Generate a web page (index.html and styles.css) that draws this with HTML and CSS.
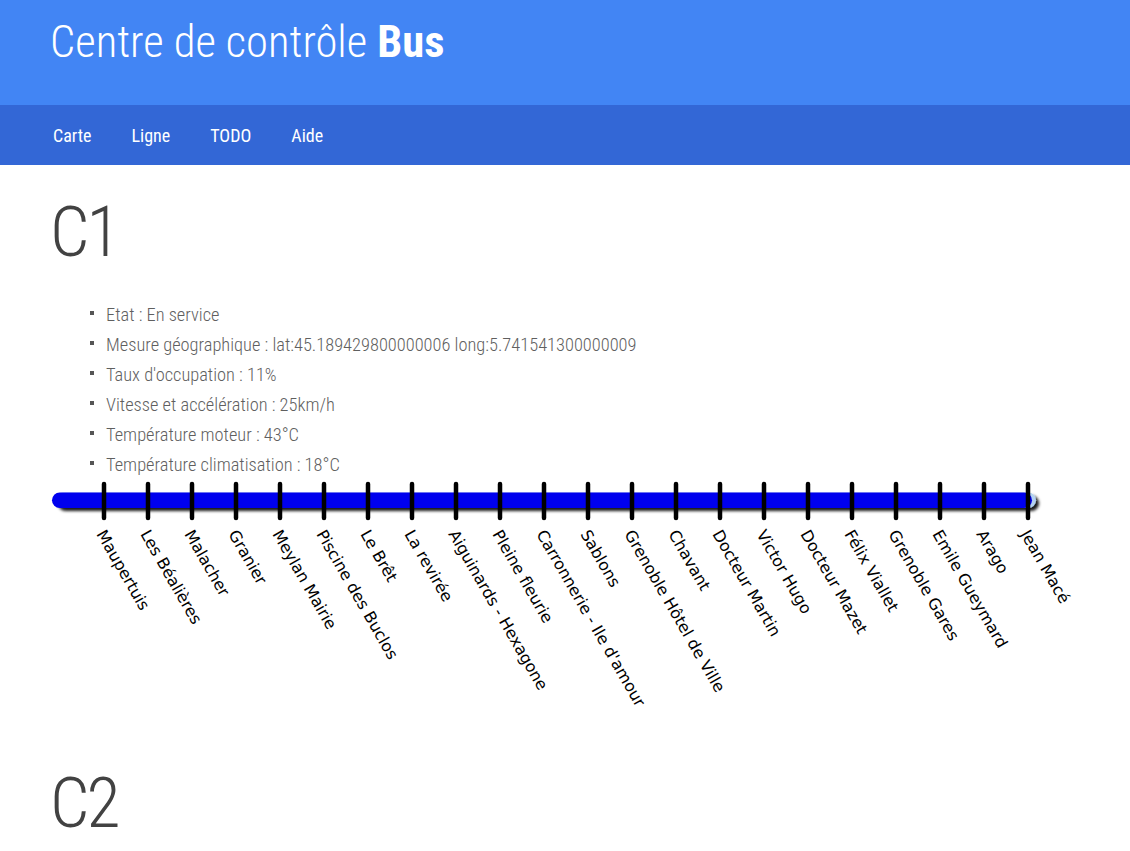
FILE: index.html
```html
<!DOCTYPE html>
<html lang="fr">
<head>
<meta charset="utf-8">
<title>Centre de contrôle Bus</title>
<link rel="stylesheet" href="styles.css">
</head>
<body>
<header class="top">
  <h1 class="title">Centre de contrôle <b>Bus</b></h1>
</header>
<nav class="menu">
  <a class="menu-item" href="#">Carte</a>
  <a class="menu-item" href="#">Ligne</a>
  <a class="menu-item" href="#">TODO</a>
  <a class="menu-item" href="#">Aide</a>
</nav>
<main class="content">
  <section class="bus">
    <h2 class="bus-name">C1</h2>
    <ul class="info">
      <li>Etat : En service</li>
      <li>Mesure géographique : lat:45.189429800000006 long:5.741541300000009</li>
      <li>Taux d'occupation : 11%</li>
      <li>Vitesse et accélération : 25km/h</li>
      <li>Température moteur : 43°C</li>
      <li>Température climatisation : 18°C</li>
    </ul>
    <svg class="line" width="1080" height="235" viewBox="0 0 1080 235">
      <defs>
        <filter id="shadow" filterUnits="userSpaceOnUse" x="-10" y="0" width="1020" height="40">
          <feDropShadow dx="3" dy="3" stdDeviation="1.5" flood-color="#000" flood-opacity="0.9"/>
        </filter>
      </defs>
      <rect class="bar-light" x="5" y="12.5" width="981" height="15.5" rx="7.75" filter="url(#shadow)"/>
      <rect class="bar" x="2" y="12.5" width="980" height="15.5" rx="7.75"/>
      <g class="ticks">
        <line x1="54" y1="4" x2="54" y2="38"/>
        <line x1="98" y1="4" x2="98" y2="38"/>
        <line x1="142" y1="4" x2="142" y2="38"/>
        <line x1="186" y1="4" x2="186" y2="38"/>
        <line x1="230" y1="4" x2="230" y2="38"/>
        <line x1="274" y1="4" x2="274" y2="38"/>
        <line x1="318" y1="4" x2="318" y2="38"/>
        <line x1="362" y1="4" x2="362" y2="38"/>
        <line x1="406" y1="4" x2="406" y2="38"/>
        <line x1="450" y1="4" x2="450" y2="38"/>
        <line x1="494" y1="4" x2="494" y2="38"/>
        <line x1="538" y1="4" x2="538" y2="38"/>
        <line x1="582" y1="4" x2="582" y2="38"/>
        <line x1="626" y1="4" x2="626" y2="38"/>
        <line x1="670" y1="4" x2="670" y2="38"/>
        <line x1="714" y1="4" x2="714" y2="38"/>
        <line x1="758" y1="4" x2="758" y2="38"/>
        <line x1="802" y1="4" x2="802" y2="38"/>
        <line x1="846" y1="4" x2="846" y2="38"/>
        <line x1="890" y1="4" x2="890" y2="38"/>
        <line x1="934" y1="4" x2="934" y2="38"/>
        <line x1="978" y1="4" x2="978" y2="38"/>
      </g>
      <g class="stops">
        <text transform="translate(46 54) rotate(60)">Maupertuis</text>
        <text transform="translate(90 54) rotate(60)">Les Béalières</text>
        <text transform="translate(134 54) rotate(60)">Malacher</text>
        <text transform="translate(178 54) rotate(60)">Granier</text>
        <text transform="translate(222 54) rotate(60)">Meylan Mairie</text>
        <text transform="translate(266 54) rotate(60)">Piscine des Buclos</text>
        <text transform="translate(310 54) rotate(60)">Le Brêt</text>
        <text transform="translate(354 54) rotate(60)">La revirée</text>
        <text transform="translate(398 54) rotate(60)">Aiguinards - Hexagone</text>
        <text transform="translate(442 54) rotate(60)">Pleine fleurie</text>
        <text transform="translate(486 54) rotate(60)">Carronnerie - Ile d'amour</text>
        <text transform="translate(530 54) rotate(60)">Sablons</text>
        <text transform="translate(574 54) rotate(60)">Grenoble Hôtel de Ville</text>
        <text transform="translate(618 54) rotate(60)">Chavant</text>
        <text transform="translate(662 54) rotate(60)">Docteur Martin</text>
        <text transform="translate(706 54) rotate(60)">Victor Hugo</text>
        <text transform="translate(750 54) rotate(60)">Docteur Mazet</text>
        <text transform="translate(794 54) rotate(60)">Félix Viallet</text>
        <text transform="translate(838 54) rotate(60)">Grenoble Gares</text>
        <text transform="translate(882 54) rotate(60)">Emile Gueymard</text>
        <text transform="translate(926 54) rotate(60)">Arago</text>
        <text transform="translate(970 54) rotate(60)">Jean Macé</text>
      </g>
    </svg>
  </section>
  <section class="bus">
    <h2 class="bus-name bus-name-next">C2</h2>
  </section>
</main>
</body>
</html>
```

FILE: styles.css
```css
html, body {
  margin: 0;
  padding: 0;
  background: #ffffff;
}

body {
  font-family: "Roboto Condensed", Roboto, "Liberation Sans", sans-serif;
  font-stretch: condensed;
  font-weight: 300;
  overflow: hidden;
}

.top {
  background: #4285f4;
  height: 105px;
  padding: 0 50px;
  box-sizing: border-box;
}

.title {
  margin: 0;
  padding-top: 19px;
  font-size: 44.6px;
  line-height: 46px;
  font-weight: 300;
  color: #ffffff;
}

.title b {
  font-weight: 700;
}

.menu {
  background: #3367d6;
  height: 60px;
  display: flex;
  align-items: center;
  gap: 40px;
  padding-left: 53px;
}

.menu-item {
  color: #ffffff;
  text-decoration: none;
  font-size: 18px;
  font-weight: 400;
}

.content {
  padding: 0 50px;
}

.bus-name {
  margin: 29px 0 29px;
  font-size: 70px;
  line-height: 77px;
  font-weight: 300;
  color: #424242;
  letter-spacing: -3px;
}

.bus-name-next {
  margin-top: 50px;
}

.info {
  list-style: none;
  margin: 0;
  padding: 0 0 0 56px;
  font-size: 18.4px;
  line-height: 30px;
  color: #5f5f5f;
}

.info li {
  position: relative;
}

.info li::before {
  content: "";
  position: absolute;
  left: -16px;
  top: 11px;
  width: 4px;
  height: 4px;
  background: #555555;
}

.line {
  display: block;
  overflow: visible;
}

.bar {
  fill: #0000ee;
}

.bar-light {
  fill: #b4d2f2;
}

.ticks line {
  stroke: #000000;
  stroke-width: 4.5;
  stroke-linecap: round;
}

.stops text {
  font-family: "DejaVu Sans", Verdana, sans-serif;
  font-stretch: normal;
  font-size: 16px;
  font-weight: 400;
  fill: #000000;
}
```
